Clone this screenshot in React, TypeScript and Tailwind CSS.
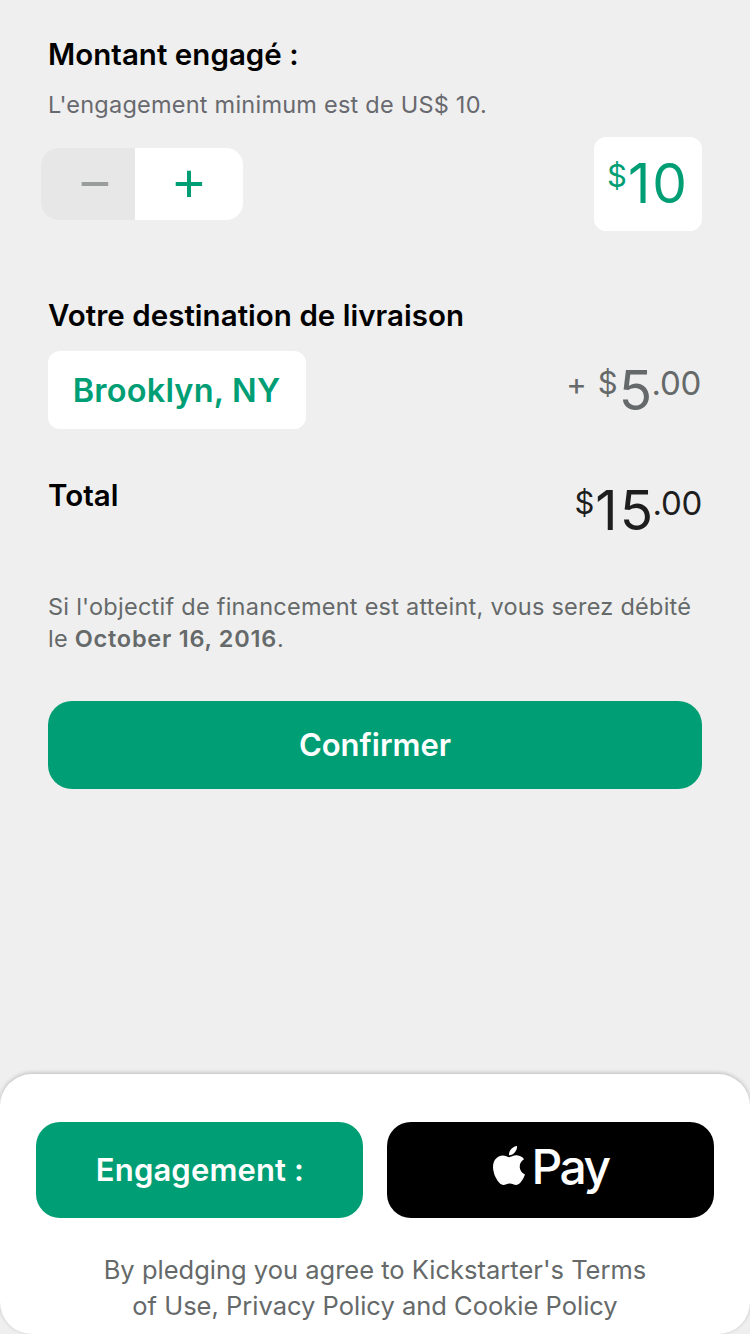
import type { ReactNode } from "react";

function Heading({ children, className = "" }: { children: ReactNode; className?: string }) {
  return (
    <h2 className={`whitespace-nowrap text-[29.5px] font-semibold leading-10 tracking-[0.03px] text-black ${className}`}>
      {children}
    </h2>
  );
}

function Price({ whole, cents, plus, className = "" }: { whole: string; cents?: string; plus?: boolean; className?: string }) {
  return (
    <div className={`flex items-start whitespace-nowrap ${className}`}>
      {plus && <span className="mr-[11px] mt-px text-[31px] leading-8">+</span>}
      <span className="text-[31px] leading-8">$</span>
      <span className="-mt-1 ml-px text-[55px] leading-[55px] tracking-[2px]">{whole}</span>
      {cents && <span className="-ml-[2.5px] text-[33px] leading-8 tracking-[-0.3px]">{cents}</span>}
    </div>
  );
}

function AppleLogo() {
  return (
    <svg className="h-[39px] w-8" viewBox="4 32 376.5 448" preserveAspectRatio="none" fill="currentColor" aria-hidden="true">
      <path d="M318.7 268.7c-.2-36.7 16.4-64.4 50-84.8-18.8-26.9-47.2-41.7-84.7-44.6-35.5-2.8-74.3 20.7-88.5 20.7-15 0-49.4-19.7-76.4-19.7C63.3 141.2 4 184.8 4 273.5q0 39.3 14.4 81.2c12.8 36.7 59 126.7 107.2 125.2 25.2-.6 43-17.9 75.8-17.9 31.8 0 48.3 17.9 76.4 17.9 48.6-.7 90.4-82.5 102.6-119.3-65.2-30.7-61.7-90-61.7-91.9zm-56.6-164.2c27.3-32.4 24.8-61.9 24-72.5-24.1 1.4-52 16.4-67.9 34.9-17.5 19.8-27.8 44.3-25.6 71.9 26.1 2 49.9-11.4 69.5-34.3z" />
    </svg>
  );
}

export default function App() {
  return (
    <div className="flex h-[1334px] w-[750px] flex-col overflow-hidden bg-[#efefef] font-['Inter',sans-serif] text-[#656969]">
      <main className="flex flex-1 flex-col px-12 pt-[34px]">
        <Heading>Montant engagé :</Heading>
        <p className="mt-[15px] whitespace-nowrap text-[23.5px] leading-8 tracking-[0.23px] text-[#68696e]">
          L'engagement minimum est de US$ 10.
        </p>
        <div className="mt-4 flex h-[94px] items-center justify-between">
          <div className="-ml-[7px] flex h-[72px] w-[202px] overflow-hidden rounded-[17px] bg-white">
            <button className="w-[94px] bg-[#e7e7e7] pl-10" aria-label="-">
              <svg className="block size-7" viewBox="0 0 28 28" aria-hidden="true">
                <path d="M.7 14H27.2" stroke="#999d9d" strokeWidth="4" />
              </svg>
            </button>
            <button className="w-[108px] pl-10" aria-label="+">
              <svg className="block size-7" viewBox="0 0 28 28" aria-hidden="true">
                <path d="M.7 14H27.1M14 .7V27.1" stroke="#009e74" strokeWidth="4" />
              </svg>
            </button>
          </div>
          <div className="h-[94px] w-[108px] rounded-xl bg-white pl-[13px] pt-[23px] text-[#009e74]">
            <Price whole="10" />
          </div>
        </div>

        <Heading className="mt-16">Votre destination de livraison</Heading>
        <div className="mt-4 flex h-[78px] items-start justify-between">
          <button className="h-[78px] w-[258px] whitespace-nowrap rounded-xl bg-white pr-px pt-0.5 text-[32.5px] font-semibold tracking-[0.2px] text-[#009e74]">
            Brooklyn, NY
          </button>
          <Price plus whole="5" cents=".00" className="mr-px mt-4" />
        </div>

        <div className="mt-[46px] flex h-[60px] items-start justify-between">
          <Heading>Total</Heading>
          <Price whole="15" cents=".00" className="mt-3 text-[#1e1e1e]" />
        </div>

        <p className="mt-14 whitespace-nowrap text-[23.5px] leading-8 tracking-[0.25px]">
          Si l'objectif de financement est atteint, vous serez débité
          <br />
          le <strong className="font-semibold tracking-[0.75px]">October 16, 2016</strong>.
        </p>
        <button className="mt-[46px] h-[88px] rounded-3xl bg-[#009e74] text-[31px] font-semibold text-white">
          Confirmer
        </button>
      </main>

      <footer className="h-[260px] rounded-[32px] bg-white px-9 pt-12 shadow-[0_-1px_4px_rgba(0,0,0,0.22)]">
        <div className="grid grid-cols-2 gap-6">
          <button className="h-24 rounded-3xl bg-[#009e74] pl-px text-[31px] font-semibold tracking-[0.15px] text-white">
            Engagement :
          </button>
          <button className="flex h-24 items-start justify-center gap-[7px] rounded-3xl bg-black pt-6 text-white" aria-label="Apple Pay">
            <AppleLogo />
            <span className="-mt-px text-[48px] font-medium leading-[44px] tracking-[-2.6px]">Pay</span>
          </button>
        </div>
        <p className="mt-[34px] whitespace-nowrap text-center text-[25.5px] leading-9">
          By pledging you agree to Kickstarter's Terms
          <br />
          of Use, Privacy Policy and Cookie Policy
        </p>
      </footer>
    </div>
  );
}
